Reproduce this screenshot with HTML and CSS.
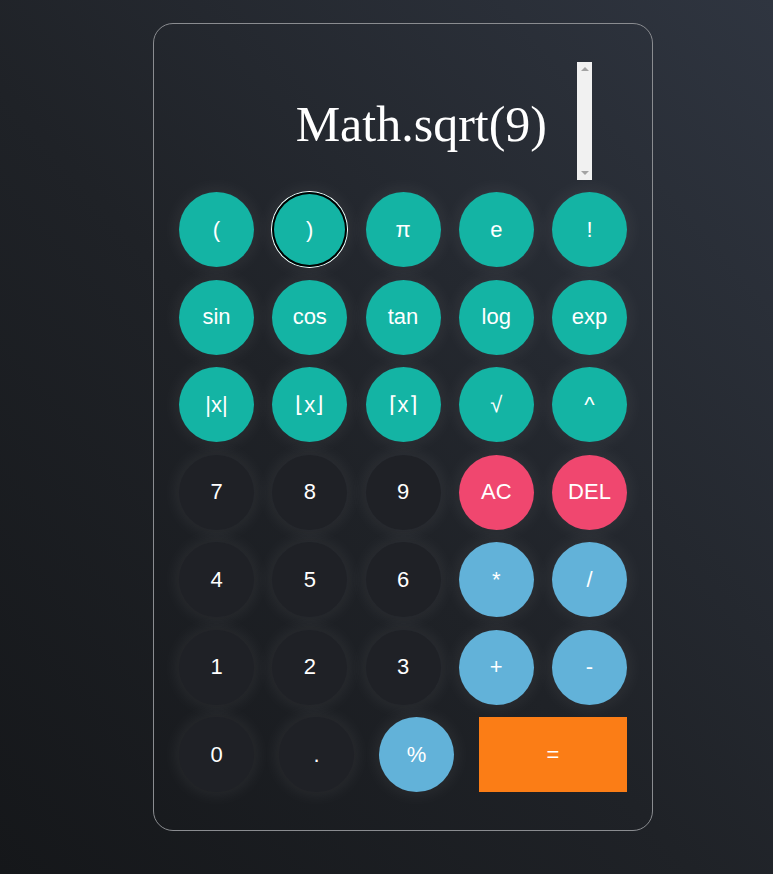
FILE: index.html
```html
<!DOCTYPE html>
<html>
<head>
<meta charset="utf-8">
<link rel="stylesheet" href="styles.css">
</head>
<body>
<div class="calc">
  <div class="screen">
    <textarea class="display" readonly>Math.sqrt(9)</textarea>
    <div class="scrollbar"><span class="arrow up"></span><span class="arrow down"></span></div>
  </div>
  <div class="row">
    <button class="btn fn">(</button>
    <button class="btn fn focused">)</button>
    <button class="btn fn">π</button>
    <button class="btn fn">e</button>
    <button class="btn fn">!</button>
  </div>
  <div class="row">
    <button class="btn fn">sin</button>
    <button class="btn fn">cos</button>
    <button class="btn fn">tan</button>
    <button class="btn fn">log</button>
    <button class="btn fn">exp</button>
  </div>
  <div class="row">
    <button class="btn fn">|x|</button>
    <button class="btn fn">⌊x⌋</button>
    <button class="btn fn">⌈x⌉</button>
    <button class="btn fn">√</button>
    <button class="btn fn">^</button>
  </div>
  <div class="row">
    <button class="btn num">7</button>
    <button class="btn num">8</button>
    <button class="btn num">9</button>
    <button class="btn clr">AC</button>
    <button class="btn clr">DEL</button>
  </div>
  <div class="row">
    <button class="btn num">4</button>
    <button class="btn num">5</button>
    <button class="btn num">6</button>
    <button class="btn op">*</button>
    <button class="btn op">/</button>
  </div>
  <div class="row">
    <button class="btn num">1</button>
    <button class="btn num">2</button>
    <button class="btn num">3</button>
    <button class="btn op">+</button>
    <button class="btn op">-</button>
  </div>
  <div class="row">
    <button class="btn num">0</button>
    <button class="btn num">.</button>
    <button class="btn op">%</button>
    <button class="btn eq">=</button>
  </div>
</div>
</body>
</html>
```

FILE: styles.css
```css
html, body {
  margin: 0;
  height: 100%;
}
body {
  background: linear-gradient(to top right, #15171a 0%, #1f2227 45%, #2f3540 100%);
  font-family: "Liberation Sans", Arial, sans-serif;
  overflow: hidden;
}
.calc {
  box-sizing: border-box;
  width: 500px;
  height: 808px;
  margin: 23px 0 0 153px;
  border: 1px solid #8a8c90;
  border-radius: 20px;
  padding: 38px 25px 37px 25px;
  display: flex;
  flex-direction: column;
  gap: 12.5px;
}
.screen {
  display: flex;
  width: 413px;
  height: 118px;
  margin-bottom: -0.5px;
}
.display {
  box-sizing: border-box;
  flex: 1;
  height: 118px;
  background: transparent;
  border: none;
  outline: none;
  resize: none;
  color: #ffffff;
  font-family: "Liberation Serif", "Times New Roman", serif;
  font-size: 50px;
  line-height: 1.15;
  text-align: right;
  padding: 34px 30px 0 0;
  margin: 0;
  overflow: hidden;
}
.scrollbar {
  width: 15px;
  height: 118px;
  background: #f1f1f1;
  display: flex;
  flex-direction: column;
  justify-content: space-between;
  align-items: center;
  padding: 5px 0;
  box-sizing: border-box;
}
.arrow {
  width: 0;
  height: 0;
  border-left: 4px solid transparent;
  border-right: 4px solid transparent;
}
.arrow.up { border-bottom: 4px solid #a3a3a3; }
.arrow.down { border-top: 4px solid #a3a3a3; }
.row {
  display: flex;
  justify-content: space-between;
  height: 75px;
}
.btn {
  width: 75px;
  height: 75px;
  border: none;
  border-radius: 50%;
  padding: 0;
  color: #ffffff;
  font-family: "Liberation Sans", Arial, sans-serif;
  font-size: 22px;
  box-shadow: 0 0 20px rgba(255, 255, 255, 0.09);
}
.fn { background: #14b4a4; }
.num { background: #1f2126; }
.clr { background: #f0476f; }
.op { background: #62b2d9; }
.eq {
  width: 148px;
  border-radius: 0;
  background: #fb7d16;
  box-shadow: none;
}
.focused {
  box-shadow: 0 0 0 1px #ffffff, inset 0 0 0 2px #000000, 0 0 20px rgba(255, 255, 255, 0.09);
}
```
